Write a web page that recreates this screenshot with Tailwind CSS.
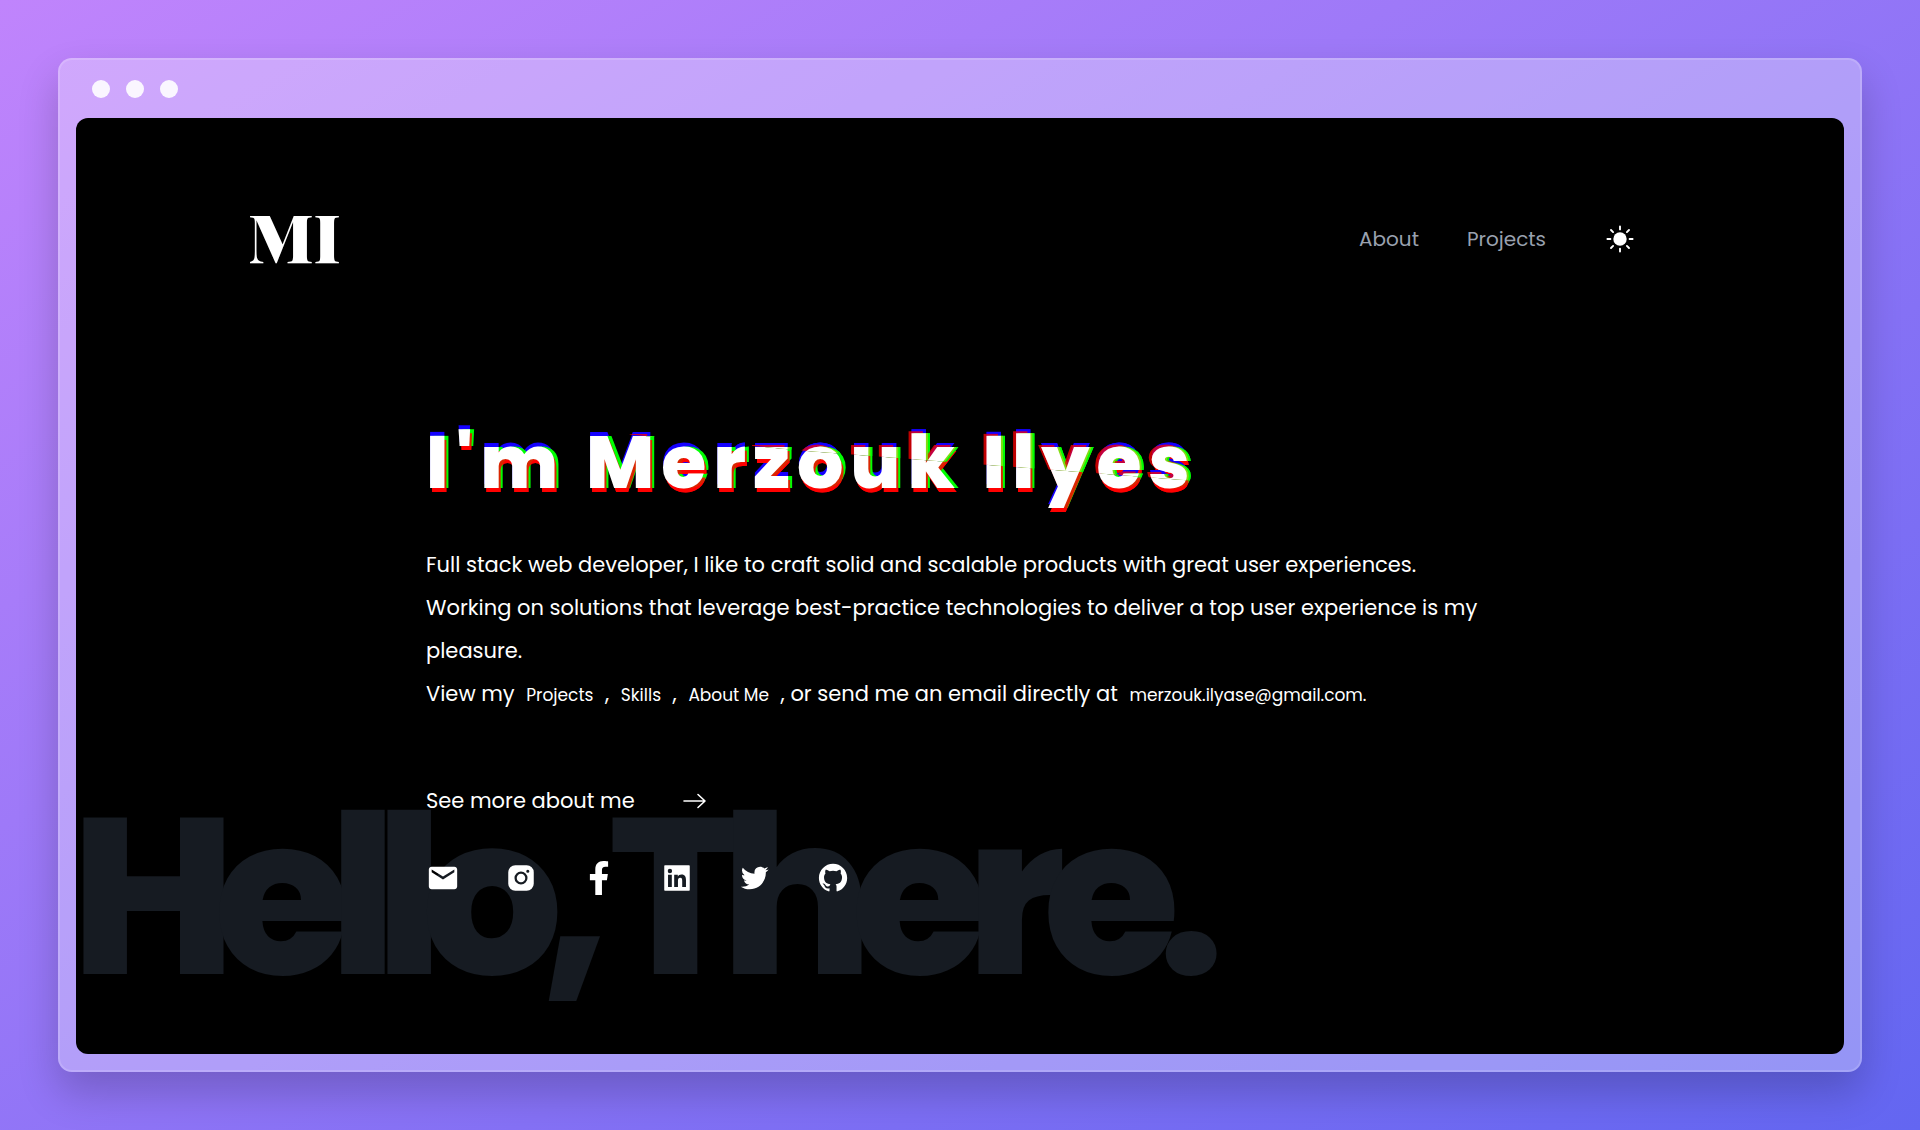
<!DOCTYPE html>
<html lang="en">
<head>
<meta charset="utf-8">
<meta name="viewport" content="width=device-width, initial-scale=1">
<title>Merzouk Ilyes</title>
<script src="https://cdn.jsdelivr.net/npm/@tailwindcss/browser@4"></script>
</head>
<body class="flex min-h-screen flex-col bg-[linear-gradient(to_bottom_right,#c084fc,#6366f1)] p-[58px] font-[Poppins,Inter,sans-serif]">
<div class="flex grow flex-col rounded-[14px] border-2 border-white/15 bg-white/30 p-4 shadow-[0_20px_40px_rgb(0_0_0/0.2)]">
  <div class="flex h-[42px] items-start gap-4 px-4 pt-1">
    <span class="size-[18px] rounded-full bg-white/90"></span>
    <span class="size-[18px] rounded-full bg-white/90"></span>
    <span class="size-[18px] rounded-full bg-white/90"></span>
  </div>

  <div class="relative grow overflow-hidden rounded-xl bg-black text-white">
    <!-- Oversized greeting behind the content -->
    <p class="absolute bottom-[46px] left-[-5px] text-[222px] leading-none font-extrabold tracking-[-22px] whitespace-nowrap text-[#161b22]">Hello, There.</p>

    <div class="relative">
      <header class="flex items-center justify-between pt-[81px] pr-[210px] pl-[172px]">
        <a href="#" class="flex h-20 items-center pb-2 font-['Playfair_Display','Liberation_Serif',serif] text-[68px] leading-none font-black">MI</a>
        <nav class="flex items-center text-xl text-gray-400">
          <a href="#about" class="mr-12">About</a>
          <a href="#projects" class="mr-[60px]">Projects</a>
          <button type="button" aria-label="Switch to light mode" class="text-white">
            <svg class="size-7" viewBox="-14 -14 28 28" fill="currentColor" stroke="currentColor" stroke-width="1.9" stroke-linecap="round">
              <circle r="6.7" stroke="none"/>
              <path d="M0-12.6v3M0 9.600v3M-12.600 0h3M9.600 0h3M-9-9l2.100 2.100M6.900 6.900L9 9M-9 9l2.100-2.100M6.900-6.900L9-9"/>
            </svg>
          </button>
        </nav>
      </header>

      <main class="px-[350px]">
        <h1 data-text="I'm Merzouk Ilyes" class="relative mt-[148px] w-fit text-[73px] leading-[72px] font-extrabold tracking-[7px] whitespace-nowrap [text-shadow:2px_4px_rgb(255_0_0/0.85),4px_0_#0f0,2px_4px_#f00,0_-4px_#1400ff] before:absolute before:inset-0 before:content-[attr(data-text)] before:[clip-path:polygon(20%_-10%,105%_-10%,105%_79%,49%_33%,26%_10%)] before:[text-shadow:2px_0_rgb(130_220_20),-3px_-2px_rgb(255_0_0/0.75),4px_0_#0f0,0_-4px_#1400ff]">I'm Merzouk Ilyes</h1>

        <p class="mt-11 text-[21px] leading-[43px]">Full stack web developer, I like to craft solid and scalable products with great user experiences.<br>
          Working on solutions that leverage best-practice technologies to deliver a top user experience is my pleasure.<br>
          View my <a href="#projects" class="px-1.5 text-[17px]">Projects</a> , <a href="#skills" class="px-1.5 text-[17px]">Skills</a> , <a href="#about" class="px-1.5 text-[17px]">About Me</a> , or send me an email directly at <a href="mailto:merzouk.ilyase@gmail.com" class="px-1.5 text-[17px]">merzouk.ilyase@gmail.com.</a></p>

        <a href="#about" class="mt-16 flex h-10 w-fit items-center gap-12 text-[21px]">See more about me
          <svg class="h-4 w-6" viewBox="0 0 24 16" fill="none" stroke="currentColor" stroke-width="1.6" stroke-linecap="round" stroke-linejoin="round"><path d="M1 8h21M15 1.500l7 6.500-7 6.500"/></svg>
        </a>

        <div class="mt-10 flex gap-11">
          <a href="mailto:merzouk.ilyase@gmail.com" aria-label="Email"><svg class="size-[34px]" viewBox="0 0 24 24" fill="currentColor"><path d="M20 4H4c-1.100 0-2 .9-2 2v12c0 1.100.9 2 2 2h16c1.100 0 2-.9 2-2V6c0-1.100-.9-2-2-2zm0 4l-8 5-8-5V6l8 5 8-5v2z"/></svg></a>
          <a href="#instagram" aria-label="Instagram"><svg class="size-[34px]" viewBox="0 0 24 24" fill="currentColor" fill-rule="evenodd"><path d="M8 3h8a5 5 0 0 1 5 5v8a5 5 0 0 1-5 5H8a5 5 0 0 1-5-5V8a5 5 0 0 1 5-5zM12 7.400a4.600 4.600 0 1 0 0 9.200 4.600 4.600 0 0 0 0-9.200zM16.800 6.100a1.100 1.100 0 1 0 0 2.200 1.100 1.100 0 0 0 0-2.200z"/><circle cx="12" cy="12" r="3"/></svg></a>
          <a href="#facebook" aria-label="Facebook"><svg class="size-[34px]" viewBox="-96 0 512 512" fill="currentColor"><path d="M279.140 288l14.220-92.660h-88.910v-60.130c0-25.350 12.420-50.060 52.240-50.060h40.420V6.260S260.430 0 225.360 0c-73.220 0-121.080 44.380-121.080 124.720v70.620H22.890V288h81.390v224h100.170V288z"/></svg></a>
          <a href="#linkedin" aria-label="LinkedIn"><svg class="size-[34px]" viewBox="0 0 24 24" fill="currentColor"><path d="M20.500 3h-17a.5.5 0 0 0-.5.5v17a.5.5 0 0 0 .5.5h17a.5.5 0 0 0 .5-.5v-17a.5.5 0 0 0-.5-.5zM8.339 18.337H5.667v-8.590h2.672v8.590zM7.003 8.574a1.548 1.548 0 1 1 0-3.096 1.548 1.548 0 0 1 0 3.096zm11.335 9.763h-2.669V14.160c0-.996-.018-2.277-1.388-2.277-1.390 0-1.601 1.086-1.601 2.207v4.248h-2.667v-8.590h2.560v1.174h.037c.355-.675 1.227-1.387 2.524-1.387 2.704 0 3.203 1.778 3.203 4.092v4.710z"/></svg></a>
          <a href="#twitter" aria-label="Twitter"><svg class="size-[34px]" viewBox="0 0 24 24" fill="currentColor"><path d="M19.633 7.997c.013.175.013.349.013.523 0 5.325-4.053 11.461-11.460 11.461-2.282 0-4.402-.661-6.186-1.809.324.037.636.050.973.050a8.070 8.070 0 0 0 5.001-1.721 4.036 4.036 0 0 1-3.767-2.793c.249.037.499.062.761.062.361 0 .724-.050 1.061-.137a4.027 4.027 0 0 1-3.230-3.953v-.050c.537.299 1.160.486 1.820.511a4.022 4.022 0 0 1-1.796-3.354c0-.748.199-1.434.548-2.032a11.457 11.457 0 0 0 8.306 4.215c-.062-.3-.1-.611-.1-.923a4.026 4.026 0 0 1 4.028-4.028c1.160 0 2.207.486 2.943 1.272a7.957 7.957 0 0 0 2.556-.973 4.020 4.020 0 0 1-1.771 2.220 8.073 8.073 0 0 0 2.319-.624 8.645 8.645 0 0 1-2.019 2.083z"/></svg></a>
          <a href="#github" aria-label="GitHub"><svg class="size-[34px]" viewBox="0 0 24 24" fill="currentColor"><path d="M12.026 2c-5.509 0-9.974 4.465-9.974 9.974 0 4.406 2.857 8.145 6.821 9.465.499.090.679-.217.679-.481 0-.237-.008-.865-.011-1.696-2.775.602-3.361-1.338-3.361-1.338-.452-1.152-1.107-1.459-1.107-1.459-.905-.619.069-.605.069-.605 1.002.070 1.527 1.028 1.527 1.028.890 1.524 2.336 1.084 2.902.829.091-.645.351-1.085.635-1.334-2.214-.251-4.542-1.107-4.542-4.930 0-1.087.389-1.979 1.024-2.675-.101-.253-.446-1.268.099-2.640 0 0 .837-.269 2.742 1.021a9.582 9.582 0 0 1 2.496-.336 9.554 9.554 0 0 1 2.496.336c1.906-1.291 2.742-1.021 2.742-1.021.545 1.372.203 2.387.099 2.640.640.696 1.024 1.587 1.024 2.675 0 3.833-2.330 4.675-4.552 4.922.355.308.675.916.675 1.846 0 1.334-.012 2.410-.012 2.737 0 .267.178.577.687.479C19.146 20.115 22 16.379 22 11.974 22 6.465 17.535 2 12.026 2z"/></svg></a>
        </div>
      </main>
    </div>
  </div>
</div>
</body>
</html>
